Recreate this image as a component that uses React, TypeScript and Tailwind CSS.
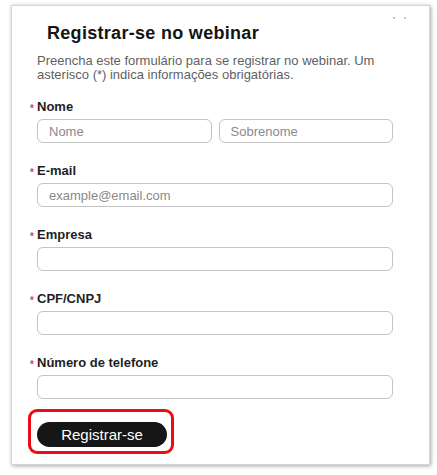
const fields = [
  { label: 'E-mail', placeholder: 'example@email.com' },
  { label: 'Empresa', placeholder: '' },
  { label: 'CPF/CNPJ', placeholder: '' },
  { label: 'Número de telefone', placeholder: '' },
]

const Label = ({ text }: { text: string }) => (
  <div className="flex items-start h-[16px] leading-[16px] text-[13px] font-bold text-[#1f1f1f]">
    <span className="-ml-[7px] w-[7px] text-[10px] leading-[16px] translate-y-[2px] text-[#e5434c]">*</span>
    <span>{text}</span>
  </div>
)

const Field = ({ placeholder }: { placeholder: string }) => (
  <input
    placeholder={placeholder}
    className="block w-full h-[24px] rounded-[6px] border border-[#c3c3c3] bg-white px-[11px] text-[13px] text-[#222] placeholder:text-[#8a8a8a] outline-none"
  />
)

const App = () => {
  return (
    <div className="bg-white w-[437px] h-[475px] pl-[11px] pt-[5px] font-['Liberation_Sans',Arial,sans-serif]">
      <div className="relative w-[419px] border border-[#d6d6d6] shadow-[1px_1px_4px_rgba(0,0,0,0.35)] bg-white pt-[16px] pl-[25px] pr-[36px] pb-[10px]">
        {/* dots top right */}
        <div className="absolute top-[11px] right-[23px] flex gap-[9px]">
          <div className="w-[2px] h-[2px] rounded-full bg-[#b5b5b5]" />
          <div className="w-[2px] h-[2px] rounded-full bg-[#b5b5b5]" />
        </div>

        <div className="ml-[10px] text-[18px] leading-[22px] font-bold tracking-[0.3px] text-[#141414]">Registrar-se no webinar</div>
        <div className="mt-[10px] text-[13px] leading-[14px] text-[#5f5f5f]">
          Preencha este formulário para se registrar no webinar. Um asterisco (*) indica informações obrigatórias.
        </div>

        <div className="mt-[17px] flex flex-col gap-[20px]">
          <div className="flex flex-col gap-[4px]">
            <Label text="Nome" />
            <div className="grid grid-cols-2 gap-[7px]">
              <Field placeholder="Nome" />
              <Field placeholder="Sobrenome" />
            </div>
          </div>

          {fields.map((f) => (
            <div key={f.label} className="flex flex-col gap-[4px]">
              <Label text={f.label} />
              <Field placeholder={f.placeholder} />
            </div>
          ))}
        </div>

        <div className="mt-[10px] -ml-[9px] inline-flex rounded-[9px] border-[3px] border-[#ea0c16] pl-[6px] pr-[4px] pt-[10px] pb-[4px]">
          <button className="w-[130px] h-[25px] rounded-full bg-[#161616] text-white text-[15px] leading-[25px]">
            Registrar-se
          </button>
        </div>
      </div>
    </div>
  )
}

export default App
